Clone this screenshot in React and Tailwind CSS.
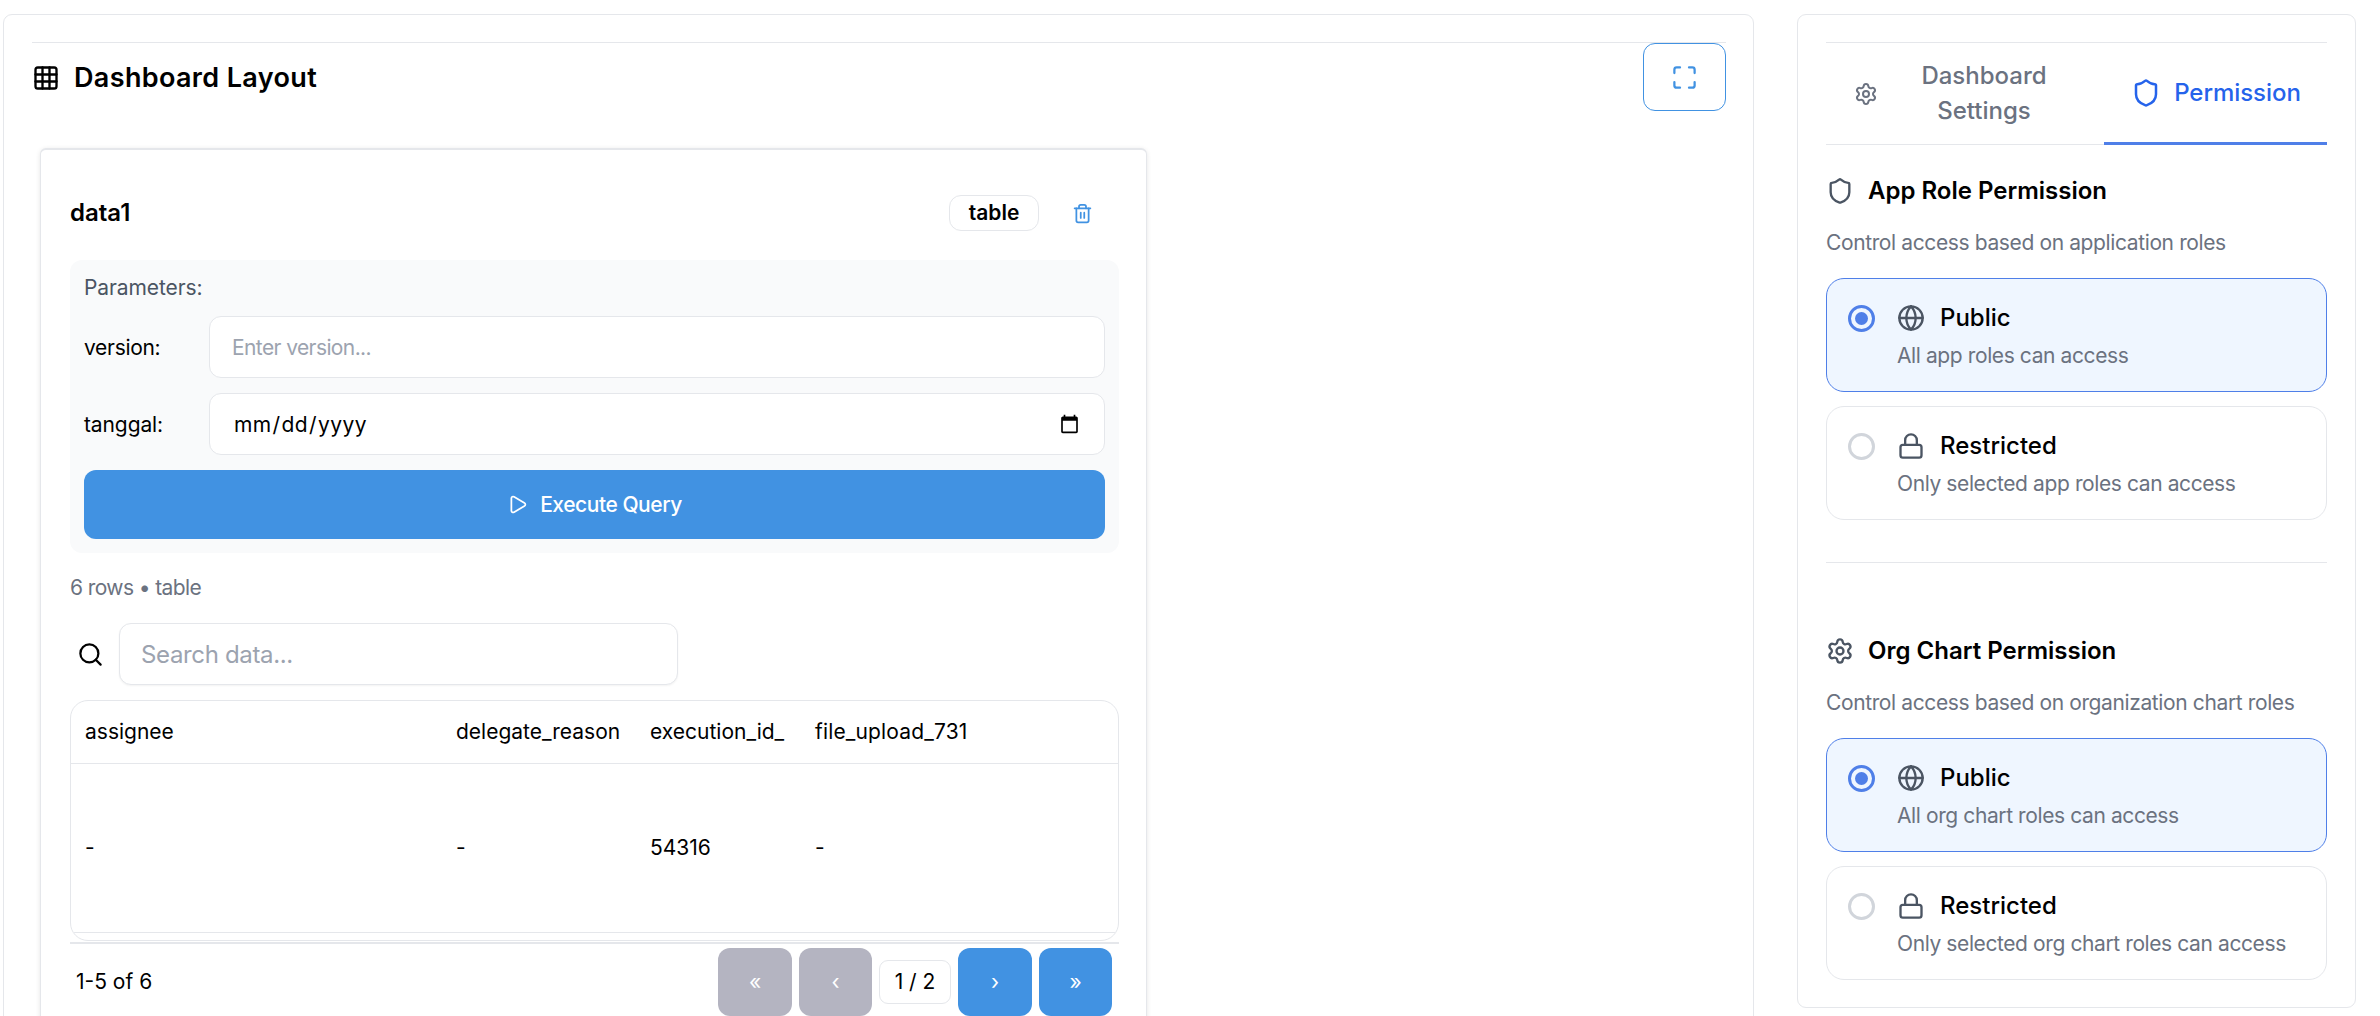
import React from "react";
import { Grid3x3, Maximize, Trash2, Play, Search, Settings, Shield, Globe, Lock } from "lucide-react";

function Option({ active, Icon, title, sub }) {
  return (
    <div className={active ? "h-[114px] rounded-[18px] border border-[#4f7fe8] bg-[#eff6ff] pl-[21px] pt-[21px]" : "h-[114px] rounded-[18px] border border-[#e5e7eb] bg-white pl-[21px] pt-[21px]"}>
      <div className="flex h-[36px] items-center">
        {active ? (
          <div className="flex h-[27px] w-[27px] items-center justify-center rounded-full border-[3px] border-[#4f7fe8]">
            <div className="h-[13px] w-[13px] rounded-full bg-[#4f7fe8]" />
          </div>
        ) : (
          <div className="h-[27px] w-[27px] rounded-full border-[3px] border-[#d1d5db]" />
        )}
        <Icon size={28} strokeWidth={2} className="ml-[22px] text-[#4b5563]" />
        <span className="ml-[15px] text-[24px] font-medium leading-[36px] text-black">{title}</span>
      </div>
      <div className="ml-[49px] mt-[4px] text-[21px] leading-[32px] tracking-[-0.4px] text-[#6b7280]">{sub}</div>
    </div>
  );
}

function Section({ Icon, title, sub, pub, res }) {
  return (
    <div>
      <div className="flex h-[36px] items-center gap-[14px]">
        <Icon size={28} strokeWidth={2} className="text-[#4b5563]" />
        <span className="text-[24px] font-semibold leading-[36px] text-black">{title}</span>
      </div>
      <div className="mt-[18px] text-[21px] leading-[32px] tracking-[-0.38px] text-[#6b7280]">{sub}</div>
      <div className="mt-[19px] flex flex-col gap-[14px]">
        <Option active Icon={Globe} title="Public" sub={pub} />
        <Option Icon={Lock} title="Restricted" sub={res} />
      </div>
    </div>
  );
}

function PageBtn({ children, off, wide }) {
  return (
    <div className={(off ? "bg-[#b4b4c1] " : "bg-[#4192e2] ") + (wide ? "w-[74px] " : "w-[73px] ") + "flex h-[68px] items-center justify-center rounded-[12px] text-[21px] text-white"}>
      {children}
    </div>
  );
}

export default function App() {
  return (
    <div className="flex h-[1016px] gap-[43px] overflow-hidden bg-white pl-[3px] pt-[14px] font-['Inter',sans-serif]">
      <div className="h-[1100px] w-[1751px] shrink-0 rounded-[9px] border border-[#e5e7eb] pl-[28px] pr-[27px] pt-[27px]">
        <div className="border-t border-[#e5e7eb]">
          <div className="flex h-[68px] items-center justify-between">
            <div className="flex items-center gap-[14px] pt-[1px]">
              <Grid3x3 size={28} strokeWidth={2} className="text-black" />
              <span className="text-[27px] font-semibold leading-[40px] tracking-[0.35px] text-black">Dashboard Layout</span>
            </div>
            <button className="flex h-[68px] w-[83px] items-center justify-center rounded-[12px] border border-[#4192e2] bg-white text-[#4192e2]">
              <Maximize size={27} strokeWidth={2} />
            </button>
          </div>
          <div className="ml-[8px] mt-[37px] h-[960px] w-[1107px] rounded-[6px] border border-t-2 border-[#e5e7eb] bg-white pl-[29px] pr-[27px] pt-[45px] shadow-[0_1px_5px_rgba(0,0,0,0.1)]">
            <div className="flex h-[36px] items-center justify-between">
              <span className="text-[24px] font-semibold leading-[36px] text-black">data1</span>
              <div className="flex items-center">
                <span className="flex h-[36px] w-[90px] items-center justify-center rounded-[12px] border border-[#e5e7eb] text-[21px] font-semibold text-black">table</span>
                <button className="ml-[33px] mr-[26px] text-[#4192e2]">
                  <Trash2 size={21} strokeWidth={2} className="block" />
                </button>
              </div>
            </div>
            <div className="mt-[29px] flex h-[293px] flex-col rounded-[12px] bg-[#f9fafb] px-[14px] py-[14px]">
              <div className="text-[21px] leading-[28px] tracking-[-0.1px] text-[#4b5563]">Parameters:</div>
              <div className="mt-[14px] flex h-[62px] items-center">
                <label className="w-[125px] shrink-0 pt-[1px] text-[21px] tracking-[-0.3px] text-black">version:</label>
                <input placeholder="Enter version..." className="h-[62px] flex-1 rounded-[12px] border border-[#e5e7eb] bg-white px-[22px] pt-[1px] text-[21px] tracking-[-0.6px] text-black outline-none placeholder:text-[#9ca3af]" />
              </div>
              <div className="mt-[15px] flex h-[62px] items-center">
                <label className="w-[125px] shrink-0 pt-[1px] text-[21px] tracking-[-0.1px] text-black">tanggal:</label>
                <input type="date" className="h-[62px] flex-1 rounded-[12px] border border-[#e5e7eb] bg-white pl-[23px] pr-[22px] pt-[1px] text-[21px] tracking-[0.4px] text-black outline-none" />
              </div>
              <button className="mt-[15px] flex h-[69px] w-full shrink-0 items-center justify-center gap-[12px] rounded-[12px] bg-[#4192e2] text-[21px] font-medium tracking-[-0.45px] text-white">
                <Play size={21} strokeWidth={2} />
                Execute Query
              </button>
            </div>
            <div className="mt-[20px] text-[21px] leading-[30px] tracking-[-0.6px] text-[#6b7280]">6 rows • table</div>
            <div className="mt-[20px] flex items-center gap-[15px] pl-[7px]">
              <Search size={27} strokeWidth={2} className="text-black" />
              <input placeholder="Search data..." className="h-[62px] w-[559px] rounded-[12px] border border-[#e5e7eb] bg-white pl-[21px] pr-[22px] text-[24px] tracking-[-0.35px] text-black shadow-[0_1px_2px_rgba(0,0,0,0.05)] outline-none placeholder:text-[#9ca3af]" />
            </div>
            <div className="mt-[15px] h-[241px] overflow-hidden rounded-[18px] border border-[#e5e7eb]">
              <table className="w-full table-fixed text-left text-[21px] text-black">
                <colgroup>
                  <col className="w-[371px]" />
                  <col className="w-[194px]" />
                  <col className="w-[165px]" />
                  <col />
                </colgroup>
                <thead>
                  <tr className="h-[62px] border-b border-[#e5e7eb]">
                    <th className="px-[14px] font-normal">assignee</th>
                    <th className="px-[14px] font-normal">delegate_reason</th>
                    <th className="overflow-hidden whitespace-nowrap px-[14px] font-normal">execution_id_</th>
                    <th className="px-[14px] font-normal tracking-[0.15px]">file_upload_731</th>
                  </tr>
                </thead>
                <tbody>
                  <tr className="h-[169px] border-b border-[#e5e7eb]">
                    <td className="px-[14px]">-</td>
                    <td className="px-[14px]">-</td>
                    <td className="px-[14px]">54316</td>
                    <td className="px-[14px]">-</td>
                  </tr>
                </tbody>
              </table>
            </div>
            <div className="mt-[1px] flex items-start justify-between border-t-2 border-[#e5e7eb] pl-[6px] pr-[7px] pt-[4px]">
              <span className="flex h-[68px] items-center text-[21px] text-black">1-5 of 6</span>
              <div className="flex items-center gap-[7px]">
                <PageBtn off wide>«</PageBtn>
                <PageBtn off>‹</PageBtn>
                <span className="flex h-[44px] w-[72px] items-center justify-center rounded-[9px] border border-[#e5e7eb] text-[21px] text-black">1 / 2</span>
                <PageBtn wide>›</PageBtn>
                <PageBtn>»</PageBtn>
              </div>
            </div>
          </div>
        </div>
      </div>

      <div className="h-[994px] w-[559px] shrink-0 rounded-[9px] border border-[#e5e7eb] px-[28px] pt-[27px]">
        <div className="flex h-[103px] border-y border-[#e5e7eb]">
          <div className="flex w-[278px] items-center pl-[28px] pr-[25px] text-[#6b7280]">
            <Settings size={24} strokeWidth={2} className="shrink-0" />
            <span className="mb-[2px] ml-[11px] flex-1 text-center text-[24px] font-medium leading-[35px]">Dashboard Settings</span>
          </div>
          <div className="-mb-px flex flex-1 items-center justify-center gap-[13px] border-b-[3px] border-[#4f7fe8] pl-[1px] text-[#2563eb]">
            <Shield size={30} strokeWidth={2} />
            <span className="text-[24px] font-medium tracking-[-0.05px]">Permission</span>
          </div>
        </div>
        <div className="mt-[28px]">
          <Section Icon={Shield} title="App Role Permission" sub="Control access based on application roles" pub="All app roles can access" res="Only selected app roles can access" />
        </div>
        <div className="mt-[42px] border-t border-[#e5e7eb] pt-[70px]">
          <Section Icon={Settings} title="Org Chart Permission" sub="Control access based on organization chart roles" pub="All org chart roles can access" res="Only selected org chart roles can access" />
        </div>
      </div>
    </div>
  );
}
